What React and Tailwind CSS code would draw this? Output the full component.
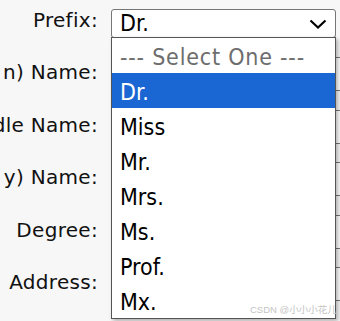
import React from 'react';

const rows = [
  { label: 'Prefix:' },
  { label: 'n) Name:' },
  { label: 'dle Name:' },
  { label: 'y) Name:' },
  { label: 'Degree:' },
  { label: 'Address:' },
];

const options = ['Dr.', 'Miss', 'Mr.', 'Mrs.', 'Ms.', 'Prof.', 'Mx.'];

const App = () => {
  return (
    <div className="relative w-[340px] h-[321px] overflow-hidden bg-[#f7f7f7] font-['DejaVu_Sans',Verdana,sans-serif]">
      <div className="pt-[8px]">
        {rows.map((row, i) => (
          <div key={row.label} className="flex h-[52.4px] items-start">
            <div className="w-[98px] shrink-0 flex justify-end whitespace-nowrap text-[20px] leading-[24px] tracking-[0.3px] text-[#111]">
              {row.label}
            </div>
            {i === 0 ? (
              <div className="ml-[13px] mt-[1px] flex h-[29px] w-[225px] shrink-0 items-center justify-between rounded-[3px] border border-[#767676] bg-white pl-[8px] pr-[8px] font-['DejaVu_Sans_Condensed','DejaVu_Sans',sans-serif] text-[23px] leading-[27px] text-black [font-stretch:condensed]">
                <span>Dr.</span>
                <svg width="18" height="10" viewBox="0 0 18 10" fill="none" className="mt-[1px]">
                  <path d="M1.5 1.5 L9 8.5 L16.5 1.5" stroke="#000" strokeWidth="2.2" />
                </svg>
              </div>
            ) : (
              <div className="ml-[13px] mt-[-3px] h-[34px] w-[260px] shrink-0 rounded-[3px] border border-[#767676] bg-white" />
            )}
          </div>
        ))}
      </div>

      <div className="absolute left-[111px] top-[37px] w-[225px] h-[282px] border border-[#555] bg-white shadow-[2px_2px_4px_rgba(0,0,0,0.3)] font-['DejaVu_Sans_Condensed','DejaVu_Sans',sans-serif] text-[23px] [font-stretch:condensed]">
        <div className="h-[35px] pl-[8px] pt-[4px] leading-[31px] tracking-[0.8px] text-[#6d6d6d]">--- Select One ---</div>
        {options.map((opt, i) => (
          <div
            key={opt}
            className={
              i === 0
                ? 'h-[35px] pl-[8px] pt-[4px] leading-[31px] bg-[#1a66d2] text-white'
                : 'h-[35px] pl-[8px] pt-[4px] leading-[31px] text-black'
            }
          >
            {opt}
          </div>
        ))}
      </div>

      <div className="absolute left-[250px] top-[304px] whitespace-nowrap font-['Liberation_Sans','Noto_Sans_CJK_SC',sans-serif] text-[9.5px] leading-[12px] text-[#c4c4c4]">
        CSDN @小小小花儿
      </div>
    </div>
  );
};

export default App;
